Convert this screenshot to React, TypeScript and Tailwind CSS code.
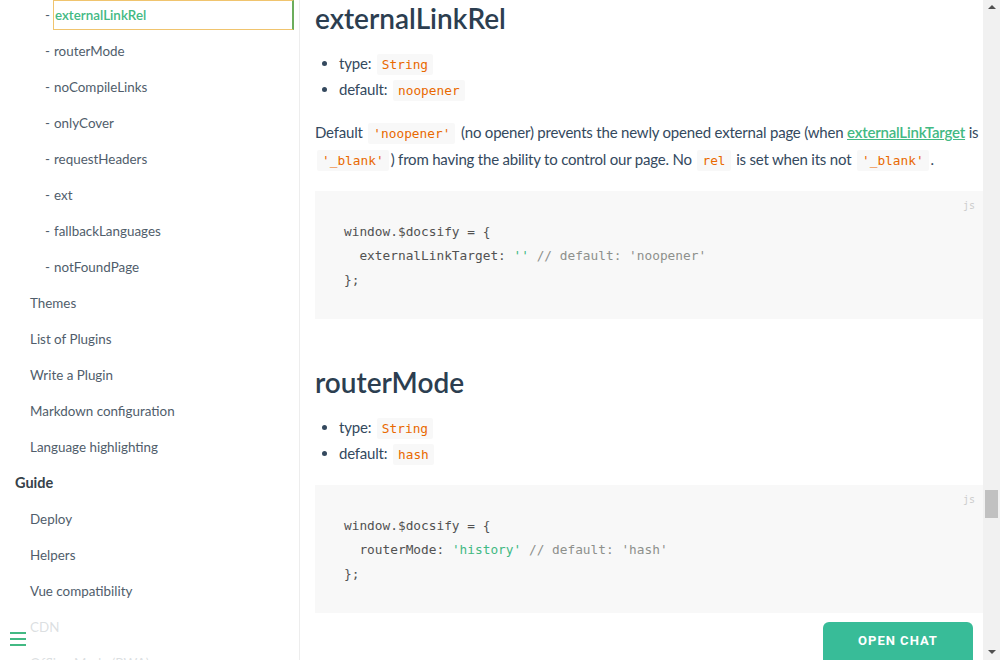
import React from 'react'

const sans = "font-['Lato','Noto_Sans',sans-serif]"
const mono = "font-['DejaVu_Sans_Mono','Liberation_Mono',monospace]"

type NavItem = { label: string; level: 0 | 1 | 2; active?: boolean }

const nav: NavItem[] = [
  { label: 'externalLinkRel', level: 2, active: true },
  { label: 'routerMode', level: 2 },
  { label: 'noCompileLinks', level: 2 },
  { label: 'onlyCover', level: 2 },
  { label: 'requestHeaders', level: 2 },
  { label: 'ext', level: 2 },
  { label: 'fallbackLanguages', level: 2 },
  { label: 'notFoundPage', level: 2 },
  { label: 'Themes', level: 1 },
  { label: 'List of Plugins', level: 1 },
  { label: 'Write a Plugin', level: 1 },
  { label: 'Markdown configuration', level: 1 },
  { label: 'Language highlighting', level: 1 },
  { label: 'Guide', level: 0 },
  { label: 'Deploy', level: 1 },
  { label: 'Helpers', level: 1 },
  { label: 'Vue compatibility', level: 1 },
  { label: 'CDN', level: 1 },
  { label: 'Offline Mode (PWA)', level: 1 },
]

function SidebarRow({ item }: { item: NavItem }) {
  if (item.level === 0) {
    return (
      <div className="h-[30px] flex items-center pl-[15px] text-[14.5px] font-bold text-[#364149]">
        {item.label}
      </div>
    )
  }
  if (item.level === 1) {
    return (
      <div className="h-[30px] flex items-center pl-[30px] text-[13.4px] text-[#505d6b]">
        {item.label}
      </div>
    )
  }
  return (
    <div className="h-[30px] flex items-center pl-[45px] text-[13.4px] text-[#505d6b]">
      <span className="w-[8px]">-</span>
      {item.active ? (
        <span className="flex-1 h-[30px] flex items-center pl-px mr-[5px] border border-[#f0c46e] border-r-2 border-r-[#6cad5c] text-[#42b983] font-semibold">
          {item.label}
        </span>
      ) : (
        <span className="pl-[1px]">{item.label}</span>
      )}
    </div>
  )
}

function Chip({ children }: { children: React.ReactNode }) {
  return (
    <code className={`${mono} text-[12.8px] leading-[16px] tracking-normal text-[#e96900] bg-[#f8f8f8] rounded-[2px] px-[5px] py-[3px] mx-[2px]`}>
      {children}
    </code>
  )
}

function CodeBlock({ lines }: { lines: React.ReactNode[] }) {
  return (
    <div className="relative bg-[#f8f8f8] h-[128px] pt-[29px] pl-[29px]">
      <span className={`absolute top-[7px] right-[8px] text-[10px] text-[#cccccc] ${mono}`}>js</span>
      <pre className={`${mono} text-[12.8px] leading-[24px] text-[#525252]`}>
        {lines.map((l, i) => (
          <div key={i}>{l}</div>
        ))}
      </pre>
    </div>
  )
}

function Bullets({ type, def }: { type: string; def: string }) {
  return (
    <ul className="list-disc pl-[24px] text-[15px] leading-[26px] tracking-[-0.2px] text-[#34495e]">
      <li>
        type: <Chip>{type}</Chip>
      </li>
      <li>
        default: <Chip>{def}</Chip>
      </li>
    </ul>
  )
}

export default function App() {
  return (
    <div className={`relative w-[1000px] h-[660px] overflow-hidden bg-white flex ${sans}`}>
      {/* sidebar */}
      <aside className="relative w-[300px] h-full border-r border-[#ededed] overflow-hidden">
        <div className="flex flex-col gap-[6px]">
          {nav.map((item) => (
            <SidebarRow key={item.label} item={item} />
          ))}
        </div>
        <div className="absolute left-0 bottom-0 w-[284px] h-[38px] bg-white/80 p-[10px] flex flex-col gap-[4px]">
          <span className="w-[16px] h-[2px] bg-[#42b983]" />
          <span className="w-[16px] h-[2px] bg-[#42b983]" />
          <span className="w-[16px] h-[2px] bg-[#42b983]" />
        </div>
      </aside>

      {/* content */}
      <main className="flex-1 h-full overflow-hidden pl-[15px] text-[#34495e]">
        <h2 className="mt-[1px] h-[34px] leading-[34px] text-[28px] font-semibold text-[#2c3e50]">externalLinkRel</h2>
        <div className="mt-[15px]">
          <Bullets type="String" def="noopener" />
        </div>
        <p className="mt-[17px] text-[15px] leading-[27px] tracking-[-0.2px] whitespace-nowrap">
          Default <Chip>'noopener'</Chip> (no opener) prevents the newly opened external page (when{' '}
          <a className="text-[#42b983] font-semibold underline">externalLinkTarget</a> is
          <br />
          <Chip>'_blank'</Chip>) from having the ability to control our page. No <Chip>rel</Chip> is set when its not{' '}
          <Chip>'_blank'</Chip>.
        </p>
        <div className="mt-[18px]">
          <CodeBlock
            lines={[
              'window.$docsify = {',
              <>
                {'  externalLinkTarget: '}
                <span className="text-[#42b983]">''</span>
                <span className="text-[#8e908c]"> // default: 'noopener'</span>
              </>,
              '};',
            ]}
          />
        </div>

        <h2 className="mt-[46px] h-[34px] leading-[34px] text-[28px] font-semibold text-[#2c3e50]">routerMode</h2>
        <div className="mt-[15px]">
          <Bullets type="String" def="hash" />
        </div>
        <div className="mt-[19px]">
          <CodeBlock
            lines={[
              'window.$docsify = {',
              <>
                {'  routerMode: '}
                <span className="text-[#42b983]">'history'</span>
                <span className="text-[#8e908c]"> // default: 'hash'</span>
              </>,
              '};',
            ]}
          />
        </div>
      </main>

      {/* scrollbar */}
      <div className="relative w-[17px] h-full bg-[#f1f1f1] flex flex-col items-center">
        <span className="mt-[5px] w-0 h-0 border-x-[4px] border-x-transparent border-b-[4px] border-b-[#505050]" />
        <span className="absolute top-[490px] left-[2px] w-[13px] h-[28px] bg-[#c1c1c1]" />
        <span className="absolute bottom-[6px] left-[5px] w-0 h-0 border-x-[4px] border-x-transparent border-t-[4px] border-t-[#505050]" />
      </div>

      {/* chat button */}
      <button className="absolute left-[823px] top-[622px] w-[150px] h-[44px] rounded-t-[6px] bg-[#38bc98] text-white text-[13px] font-bold tracking-[1px] font-['Roboto','Liberation_Sans',sans-serif] flex items-start justify-center pt-[9px]">
        OPEN CHAT
      </button>
    </div>
  )
}
